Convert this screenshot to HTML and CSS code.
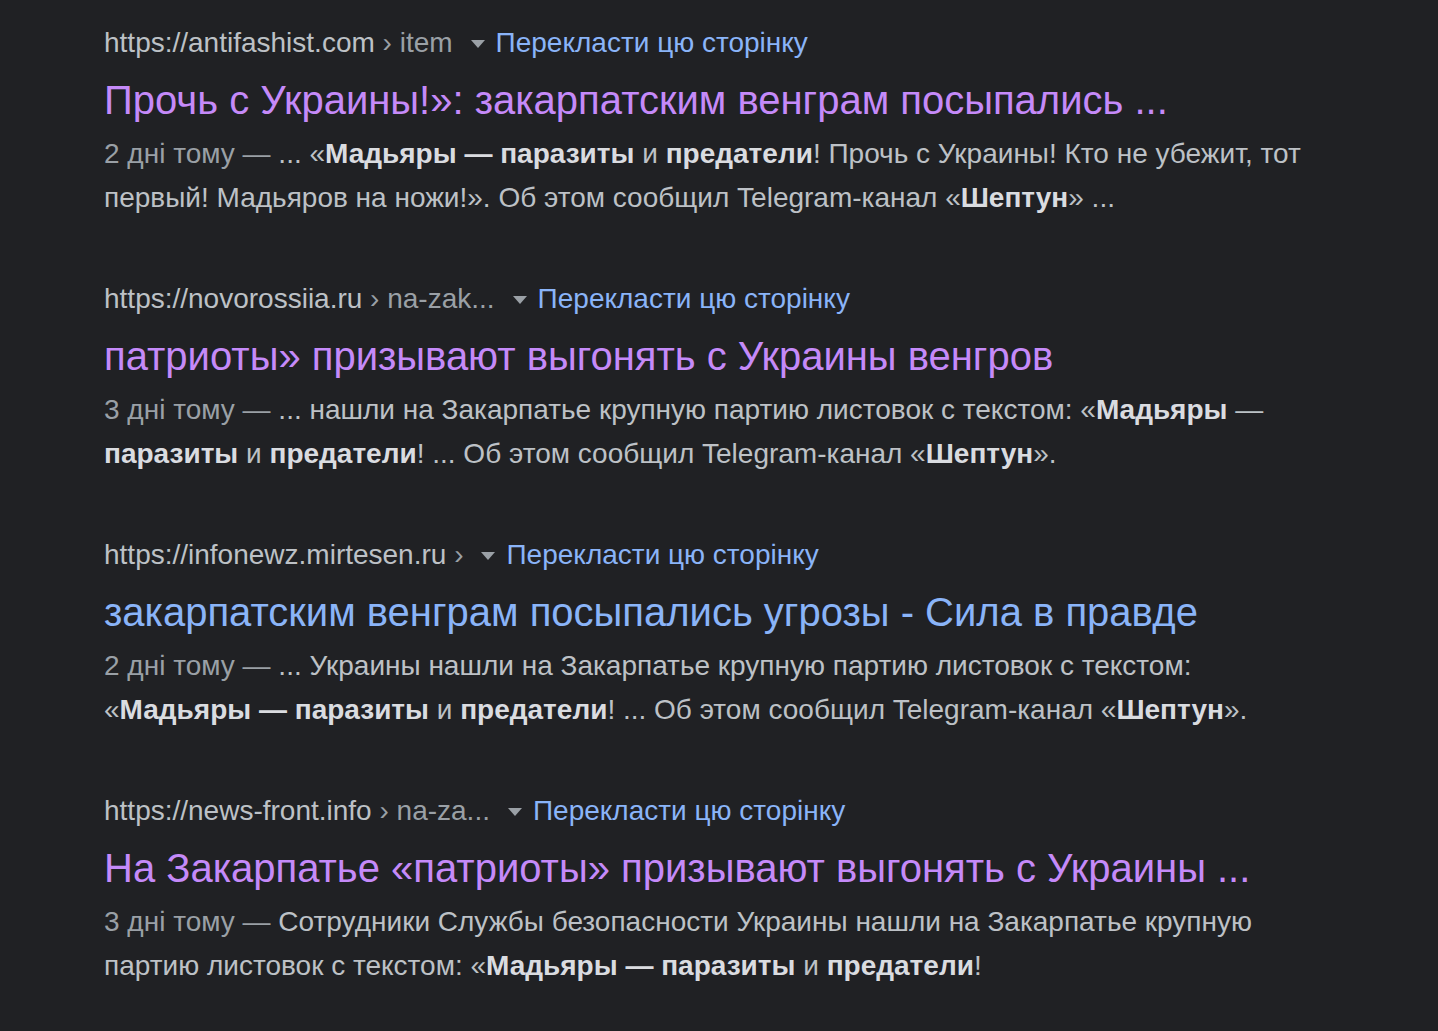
FILE: index.html
```html
<!DOCTYPE html>
<html lang="ru">
<head>
<meta charset="utf-8">
<title>Результаты поиска</title>
<link rel="stylesheet" href="styles.css">
</head>
<body>
<main class="results">
  <div class="result">
    <div class="url"><span class="site">https://antifashist.com</span><span class="crumb"> › item</span><span class="caret"></span><a class="translate" href="#">Перекласти цю сторінку</a></div>
    <h3 class="title visited">Прочь с Украины!»: закарпатским венграм посыпались ...</h3>
    <div class="snippet"><span class="date">2 дні тому —</span> ... «<b>Мадьяры — паразиты</b> и <b>предатели</b>! Прочь с Украины! Кто не убежит, тот первый! Мадьяров на ножи!». Об этом сообщил Telegram-канал «<b>Шептун</b>» ...</div>
  </div>
  <div class="result">
    <div class="url"><span class="site">https://novorossiia.ru</span><span class="crumb"> › na-zak...</span><span class="caret"></span><a class="translate" href="#">Перекласти цю сторінку</a></div>
    <h3 class="title visited">патриоты» призывают выгонять с Украины венгров</h3>
    <div class="snippet"><span class="date">3 дні тому —</span> ... нашли на Закарпатье крупную партию листовок с текстом: «<b>Мадьяры</b> — <b>паразиты</b> и <b>предатели</b>! ... Об этом сообщил Telegram-канал «<b>Шептун</b>».</div>
  </div>
  <div class="result">
    <div class="url"><span class="site">https://infonewz.mirtesen.ru</span><span class="crumb"> ›</span><span class="caret"></span><a class="translate" href="#">Перекласти цю сторінку</a></div>
    <h3 class="title">закарпатским венграм посыпались угрозы - Сила в правде</h3>
    <div class="snippet"><span class="date">2 дні тому —</span> ... Украины нашли на Закарпатье крупную партию листовок с текстом: «<b>Мадьяры — паразиты</b> и <b>предатели</b>! ... Об этом сообщил Telegram-канал «<b>Шептун</b>».</div>
  </div>
  <div class="result">
    <div class="url"><span class="site">https://news-front.info</span><span class="crumb"> › na-za...</span><span class="caret"></span><a class="translate" href="#">Перекласти цю сторінку</a></div>
    <h3 class="title visited">На Закарпатье «патриоты» призывают выгонять с Украины ...</h3>
    <div class="snippet"><span class="date">3 дні тому —</span> Сотрудники Службы безопасности Украины нашли на Закарпатье крупную партию листовок с текстом: «<b>Мадьяры — паразиты</b> и <b>предатели</b>!</div>
  </div>
</main>
</body>
</html>
```

FILE: styles.css
```css
html, body {
  margin: 0;
  padding: 0;
  background: #202124;
}
body {
  font-family: "Liberation Sans", Arial, sans-serif;
  color: #bdc1c6;
  min-height: 1031px;
}
.results {
  padding: 21px 0 0 104px;
  width: 1200px;
  display: flex;
  flex-direction: column;
  gap: 57px;
}
.result {
  display: flex;
  flex-direction: column;
}
.url {
  font-size: 28px;
  line-height: 44px;
  height: 44px;
  white-space: nowrap;
  display: flex;
  align-items: center;
}
.site {
  color: #bdc1c6;
}
.crumb {
  color: #9aa0a6;
  white-space: pre;
}
.caret {
  width: 0;
  height: 0;
  border-left: 7px solid transparent;
  border-right: 7px solid transparent;
  border-top: 8px solid #9aa0a6;
  margin: 2px 11px 0 18px;
}
.translate {
  color: #8ab4f8;
  text-decoration: none;
}
.title {
  margin: 9px 0 0;
  font-weight: 400;
  font-size: 40px;
  line-height: 52px;
  color: #8ab4f8;
  white-space: nowrap;
}
.title.visited {
  color: #c58af9;
}
.snippet {
  margin-top: 6px;
  font-size: 28px;
  line-height: 44px;
  color: #bdc1c6;
}
.date {
  color: #9aa0a6;
}
.snippet b {
  color: #dadce0;
  font-weight: 700;
}
```
